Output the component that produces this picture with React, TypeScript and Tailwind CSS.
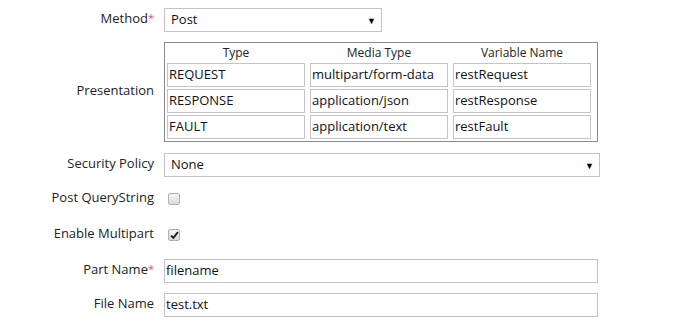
import React from 'react';

const font = { fontFamily: '"Open Sans", "Liberation Sans", sans-serif' };

const Label: React.FC<{ text: string; required?: boolean }> = ({ text, required }) => (
  <div className="w-[154px] shrink-0 text-right text-[13px] text-[#222] leading-none pb-[3px]">
    {text}
    {required && <span className="text-[#e8457a] text-[11px] align-top">*</span>}
  </div>
);

const Select: React.FC<{ value: string; width: string }> = ({ value, width }) => (
  <div className={`${width} h-[24px] border border-[#c4c4c4] bg-white flex items-center justify-between pl-[6px] pr-[5px]`}>
    <span className="text-[13px] text-[#111]">{value}</span>
    <span className="text-[9px] text-black leading-none">▼</span>
  </div>
);

const Field: React.FC<{ value: string; className?: string }> = ({ value, className }) => (
  <div className={`h-[24px] border border-[#c4c4c4] bg-white flex items-center pl-[1px] text-[13px] text-[#111] ${className ?? ''}`}>
    {value}
  </div>
);

const Checkbox: React.FC<{ checked?: boolean }> = ({ checked }) => (
  <div className="ml-[4px] w-[12px] h-[12px] rounded-[2px] border border-[#b0b0b0] bg-gradient-to-b from-[#f4f4f4] to-[#dadada] flex items-center justify-center">
    {checked && (
      <svg width="9" height="8" viewBox="0 0 9 8">
        <path d="M1 4.6 L3.3 6.8 L8 1.2" stroke="#222" strokeWidth="2" fill="none" />
      </svg>
    )}
  </div>
);

const rows = [
  ['REQUEST', 'multipart/form-data', 'restRequest'],
  ['RESPONSE', 'application/json', 'restResponse'],
  ['FAULT', 'application/text', 'restFault'],
];

export default function App() {
  return (
    <div className="w-[679px] h-[335px] bg-white pt-[8px]" style={font}>
      {/* Method */}
      <div className="flex items-center gap-[10px] h-[24px]">
        <Label text="Method" required />
        <Select value="Post" width="w-[218px]" />
      </div>

      {/* Presentation */}
      <div className="flex items-center gap-[10px] mt-[10px]">
        <Label text="Presentation" />
        <div className="w-[434px] border border-[#8a8a8a] pl-[2px] pb-[2px]">
          <div className="grid grid-cols-[138px_138px_138px] gap-x-[5px] h-[20px] items-center text-[12px] text-[#222] text-center">
            <span>Type</span>
            <span>Media Type</span>
            <span>Variable Name</span>
          </div>
          <div className="flex flex-col gap-[2px]">
            {rows.map((r) => (
              <div key={r[0]} className="grid grid-cols-[138px_138px_138px] gap-x-[5px]">
                {r.map((c) => (
                  <Field key={c} value={c} />
                ))}
              </div>
            ))}
          </div>
        </div>
      </div>

      {/* Security Policy */}
      <div className="flex items-center gap-[10px] h-[24px] mt-[11px]">
        <Label text="Security Policy" />
        <Select value="None" width="w-[436px]" />
      </div>

      {/* Post QueryString */}
      <div className="flex items-center gap-[10px] h-[24px] mt-[10px]">
        <Label text="Post QueryString" />
        <Checkbox />
      </div>

      {/* Enable Multipart */}
      <div className="flex items-center gap-[10px] h-[24px] mt-[12px]">
        <Label text="Enable Multipart" />
        <Checkbox checked />
      </div>

      {/* Part Name */}
      <div className="flex items-center gap-[10px] h-[24px] mt-[12px]">
        <Label text="Part Name" required />
        <Field value="filename" className="w-[434px]" />
      </div>

      {/* File Name */}
      <div className="flex items-center gap-[10px] h-[24px] mt-[10px]">
        <Label text="File Name" />
        <Field value="test.txt" className="w-[434px]" />
      </div>
    </div>
  );
}
